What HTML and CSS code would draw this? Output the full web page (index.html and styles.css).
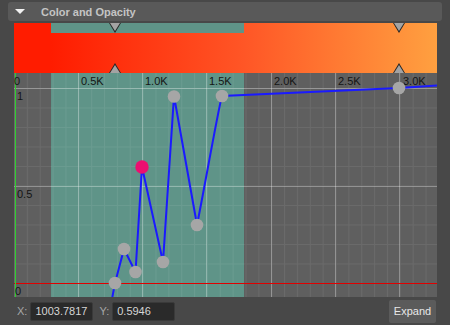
FILE: index.html
```html
<!DOCTYPE html>
<html lang="en">
	<head>
		<meta charset="UTF-8" />
		<meta name="viewport" content="width=device-width, initial-scale=1.0" />
		<title>Color and Opacity</title>
		<link rel="stylesheet" href="styles.css">
	</head>
	<body>
		<div class="panel-header">
			<span class="panel-arrow"></span>
			<span class="panel-title">Color and Opacity</span>
		</div>
		<div class="gradient-strip">
			<div class="strip-left"></div>
			<div class="strip-range">
				<div class="strip-band"></div>
			</div>
			<span class="marker marker-top" style="left: 95px"></span>
			<span class="marker marker-bottom" style="left: 95px"></span>
			<span class="marker marker-top" style="left: 379px"></span>
			<span class="marker marker-bottom" style="left: 379px"></span>
		</div>
		<svg class="plot" width="423" height="224" viewBox="14 73 423 224">
			<defs>
				<pattern id="minor" x="14" y="88" width="12.86" height="19.5" patternUnits="userSpaceOnUse">
					<path d="M0.5 0 V19.5 M0 0.5 H12.86" stroke="rgba(255,255,255,0.07)" stroke-width="1" fill="none" />
				</pattern>
			</defs>
			<rect x="14" y="73" width="423" height="224" fill="#5f5f5f" />
			<rect x="51" y="73" width="193" height="224" fill="#5f9488" />
			<rect x="14" y="73" width="423" height="224" fill="url(#minor)" />
			<g class="grid-major">
				<line x1="78.5" y1="73" x2="78.5" y2="297" />
				<line x1="142.5" y1="73" x2="142.5" y2="297" />
				<line x1="206.5" y1="73" x2="206.5" y2="297" />
				<line x1="271.5" y1="73" x2="271.5" y2="297" />
				<line x1="335.5" y1="73" x2="335.5" y2="297" />
				<line x1="399.5" y1="73" x2="399.5" y2="297" />
				<line x1="14" y1="88.5" x2="437" y2="88.5" />
				<line x1="14" y1="186.5" x2="437" y2="186.5" />
			</g>
			<line x1="14" y1="283.5" x2="437" y2="283.5" stroke="#e00000" />
			<line x1="15.5" y1="73" x2="15.5" y2="297" stroke="#2fd02f" />
			<g class="axis-label">
				<text x="14" y="85">0</text>
				<text x="81" y="85">0.5K</text>
				<text x="145" y="85">1.0K</text>
				<text x="209" y="85">1.5K</text>
				<text x="274" y="85">2.0K</text>
				<text x="338" y="85">2.5K</text>
				<text x="403" y="85">3.0K</text>
				<text x="17" y="100">1</text>
				<text x="17" y="198">0.5</text>
				<text x="15" y="295">0</text>
			</g>
			<path class="curve" d="M112 299 L115 283 L124 249 L135.5 272 L142 167 L163 262 L174 96 L197 225 C205 185 219 105 222 96 L399 88 L437 85.5" />
			<g class="point">
				<circle cx="115" cy="283" r="6.3" />
				<circle cx="124" cy="249" r="6.3" />
				<circle cx="135.5" cy="272" r="6.3" />
				<circle cx="163" cy="262" r="6.3" />
				<circle cx="174" cy="96.5" r="6.3" />
				<circle cx="197" cy="225" r="6.3" />
				<circle cx="222" cy="96" r="6.3" />
				<circle cx="399" cy="88" r="6.3" />
			</g>
			<circle class="point-active" cx="142" cy="167" r="6.7" />
		</svg>
		<div class="bottom-bar">
			<label class="field-label">X:</label>
			<div class="field">1003.7817</div>
			<label class="field-label">Y:</label>
			<div class="field">0.5946</div>
			<button class="expand-btn">Expand</button>
		</div>
	</body>
</html>
```

FILE: styles.css
```css
body {
	margin: 0;
	width: 450px;
	height: 325px;
	overflow: hidden;
	background-color: #484848;
	font-family: "Liberation Sans", Arial, sans-serif;
}
.panel-header {
	display: flex;
	align-items: center;
	height: 19px;
	margin: 2px 8px 0 8px;
	background-color: #595959;
	border-radius: 3px;
}
.panel-arrow {
	width: 0;
	height: 0;
	margin-left: 7px;
	border-left: 5px solid transparent;
	border-right: 5px solid transparent;
	border-top: 5px solid #f2f2f2;
}
.panel-title {
	margin-left: 16px;
	font-size: 11px;
	font-weight: bold;
	color: #c4c4c4;
}
.gradient-strip {
	position: relative;
	display: flex;
	width: 423px;
	height: 50px;
	margin: 2px 0 0 14px;
	background: linear-gradient(to right, #ff1c00 0, #ff1c00 37px, #ff5626 230px, #ffa040 100%);
}
.strip-left {
	width: 37px;
	background-color: #ff1c00;
}
.strip-range {
	width: 193px;
}
.strip-band {
	height: 10px;
	background-color: #5f9488;
}
.marker {
	position: absolute;
	width: 0;
	height: 0;
	border-left: 6.5px solid transparent;
	border-right: 6.5px solid transparent;
}
.marker-top {
	top: 0;
	border-top: 10px solid #262626;
}
.marker-top::after {
	content: "";
	position: absolute;
	left: -5px;
	top: -10px;
	border-left: 5px solid transparent;
	border-right: 5px solid transparent;
	border-top: 8px solid #a3a3a3;
}
.marker-bottom {
	bottom: 0;
	border-bottom: 10px solid #262626;
}
.marker-bottom::after {
	content: "";
	position: absolute;
	left: -5px;
	top: 2px;
	border-left: 5px solid transparent;
	border-right: 5px solid transparent;
	border-bottom: 8px solid #a3a3a3;
}
.plot {
	display: block;
	margin-left: 14px;
}
.grid-major line {
	stroke: rgba(255, 255, 255, 0.3);
	stroke-width: 1;
}
.axis-label text {
	font-family: "Liberation Sans", Arial, sans-serif;
	font-size: 11px;
	fill: #141414;
}
.curve {
	fill: none;
	stroke: #1a1aff;
	stroke-width: 2;
}
.point circle {
	fill: #a6a6a6;
}
.point-active {
	fill: #ec0f70;
}
.bottom-bar {
	display: flex;
	align-items: center;
	height: 28px;
	padding: 0 14px 0 17px;
}
.field-label {
	font-size: 11px;
	color: #a6a6a6;
	margin-right: 3px;
}
.field {
	width: 57px;
	height: 17px;
	line-height: 17px;
	padding-left: 4px;
	margin-right: 6px;
	background-color: #2a2a2a;
	border: 1px solid #3a3a3a;
	border-radius: 2px;
	font-size: 11px;
	color: #d6d6d6;
}
.expand-btn {
	margin-left: auto;
	width: 47px;
	height: 23px;
	padding: 0;
	border: none;
	border-radius: 2px;
	background-color: #5b5b5b;
	font-family: "Liberation Sans", Arial, sans-serif;
	font-size: 11px;
	color: #e8e8e8;
}
```
